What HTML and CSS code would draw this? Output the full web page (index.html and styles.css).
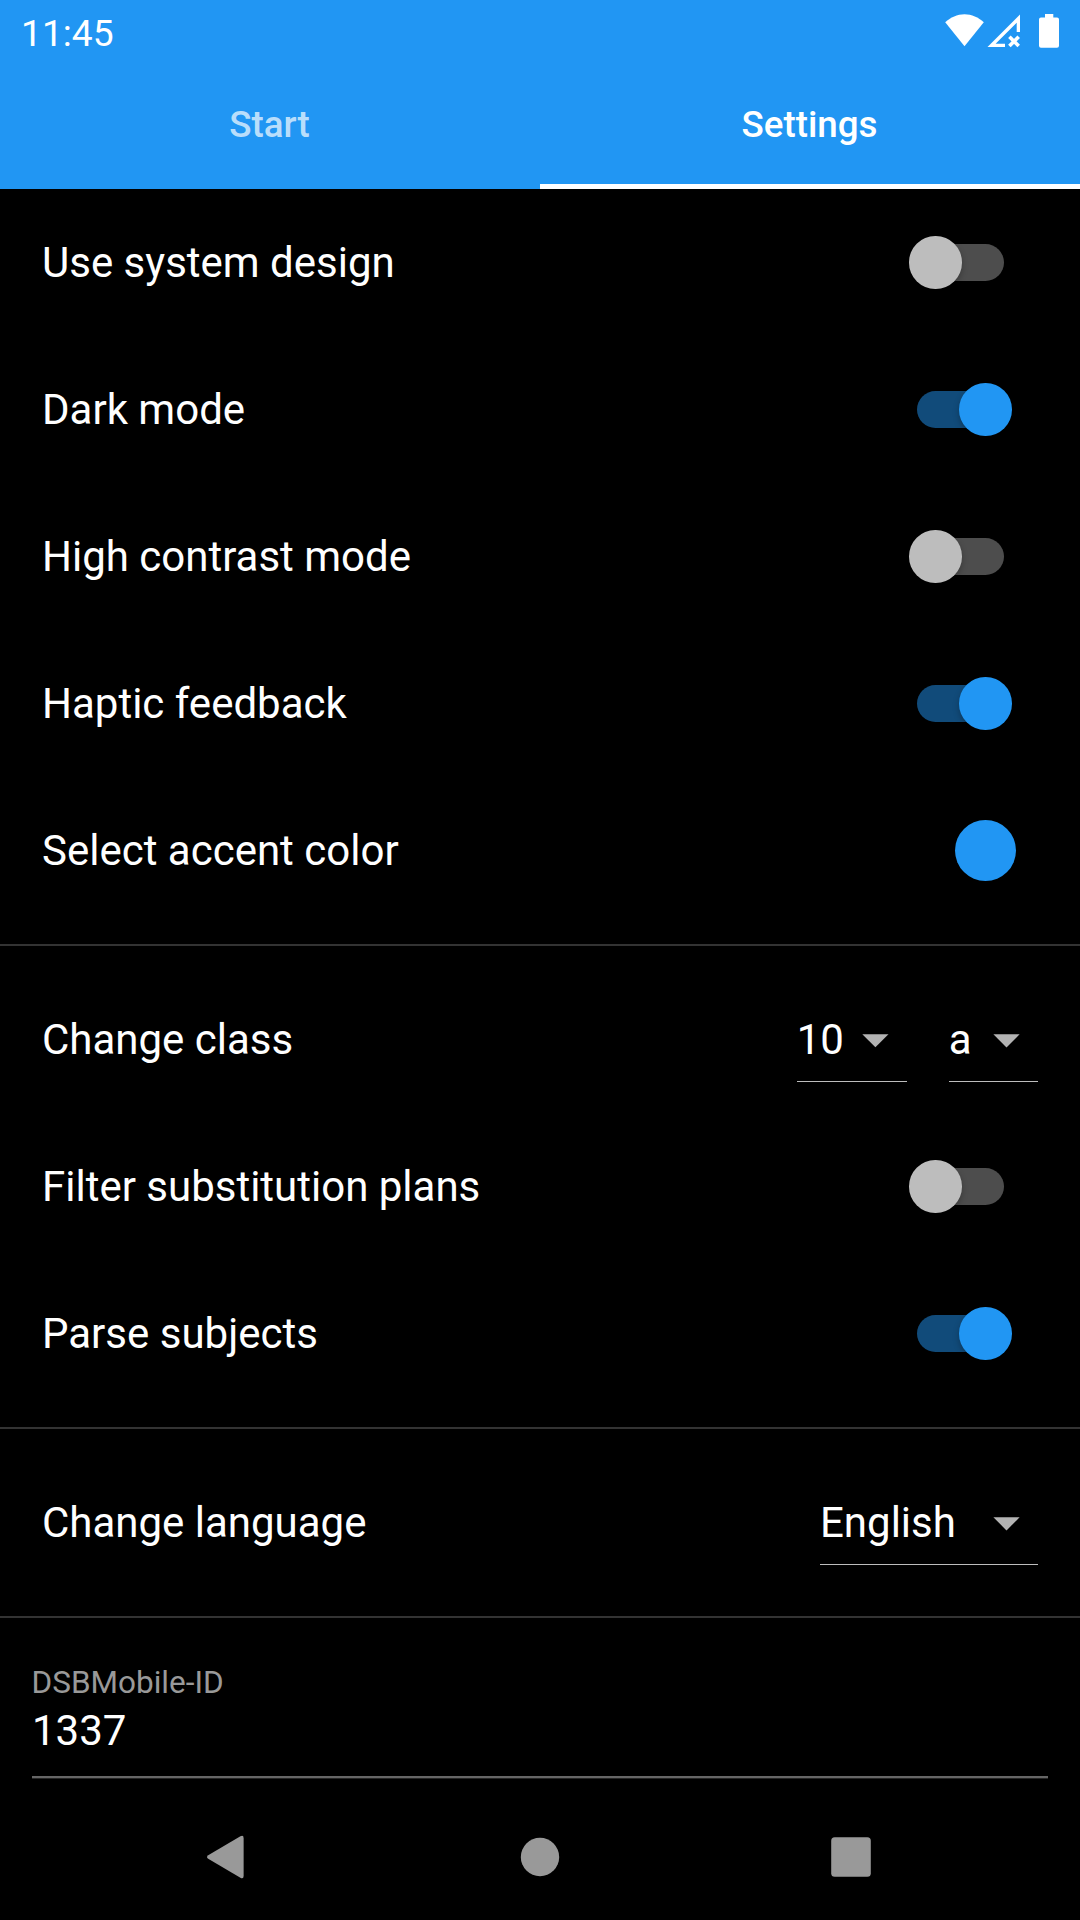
FILE: index.html
```html
<!DOCTYPE html>
<html lang="en">
<head>
<meta charset="utf-8">
<title>Settings</title>
<link rel="stylesheet" href="styles.css">
</head>
<body>
<header class="app-bar">
  <div class="status">
    <span class="clock">11:45</span>
    <svg class="status-icons" width="120" height="63" viewBox="940 0 120 63" fill="#fff">
      <path d="M945.2 22.3C950.6 17.2 957.3 14.2 964.5 14.2S978.4 17.2 983.8 22.3L964.5 46.2Z"/>
      <path d="M987.5 47L1020 14.5V32H1016.7V22.7L995.6 43.7H1005V47Z"/>
      <path d="M1009.4 36.7L1018.7 46M1018.7 36.7L1009.4 46" stroke="#fff" stroke-width="3.6"/>
      <path d="M1045 14h8.3v3.6h3.7a2 2 0 0 1 2 2V45.7a2 2 0 0 1-2 2h-16a2 2 0 0 1-2-2V19.6a2 2 0 0 1 2-2h4z"/>
    </svg>
  </div>
  <nav class="tabs">
    <div class="tab">Start</div>
    <div class="tab active">Settings</div>
  </nav>
</header>

<main class="settings">
  <div class="row"><span>Use system design</span><span class="switch"><i></i></span></div>
  <div class="row"><span>Dark mode</span><span class="switch on"><i></i></span></div>
  <div class="row"><span>High contrast mode</span><span class="switch"><i></i></span></div>
  <div class="row"><span>Haptic feedback</span><span class="switch on"><i></i></span></div>
  <div class="row"><span>Select accent color</span><span class="swatch"></span></div>
  <div class="divider"></div>
  <div class="row">
    <span>Change class</span>
    <div class="selects">
      <div class="select grade"><span>10</span><svg viewBox="0 0 24 24"><path d="M7 10l5 5 5-5z"/></svg></div>
      <div class="select letter"><span>a</span><svg viewBox="0 0 24 24"><path d="M7 10l5 5 5-5z"/></svg></div>
    </div>
  </div>
  <div class="row"><span>Filter substitution plans</span><span class="switch"><i></i></span></div>
  <div class="row"><span>Parse subjects</span><span class="switch on"><i></i></span></div>
  <div class="divider"></div>
  <div class="row">
    <span>Change language</span>
    <div class="selects">
      <div class="select language"><span>English</span><svg viewBox="0 0 24 24"><path d="M7 10l5 5 5-5z"/></svg></div>
    </div>
  </div>
  <div class="divider"></div>
  <div class="field">
    <div class="field-label">DSBMobile-ID</div>
    <div class="field-value">1337</div>
  </div>
</main>

<footer class="system-nav">
  <svg width="1080" height="126" viewBox="0 0 1080 126" fill="#999">
    <path d="M208.2 61.2L240.4 42.2Q243.6 40.6 243.6 44V82Q243.6 85.4 240.4 83.8L208.2 64.8Q205.8 63 208.2 61.2Z"/>
    <circle cx="540" cy="63" r="19.2"/>
    <rect x="831.2" y="43.2" width="39.6" height="39.6" rx="3.5"/>
  </svg>
</footer>
</body>
</html>
```
FILE: styles.css
```css
* { box-sizing: border-box; }

body {
  margin: 0;
  width: 1080px;
  height: 1920px;
  display: flex;
  flex-direction: column;
  overflow: hidden;
  background: #000;
  color: #fff;
  font-family: Roboto, sans-serif;
  font-size: 42px;
}

.app-bar { background: #2196f3; }

.status {
  display: flex;
  justify-content: space-between;
  height: 63px;
  padding: 0 20px 0 21px;
}

.clock { font-size: 37.2px; line-height: 67px; }

.tabs { display: flex; height: 126px; }

.tab {
  flex: 1;
  display: flex;
  align-items: center;
  justify-content: center;
  border-bottom: 5px solid transparent;
  padding: 1px 1px 0 0;
  color: rgba(255, 255, 255, .7);
  font-size: 36.75px;
  font-weight: 500;
}

.tab.active { color: #fff; border-bottom-color: #fff; }

.settings { flex: 1; }

.row {
  display: flex;
  align-items: center;
  justify-content: space-between;
  height: 147px;
  padding: 0 42px;
}

.switch {
  display: flex;
  align-items: center;
  width: 86.6px;
  height: 36.75px;
  margin-right: 34px;
  border-radius: 19px;
  background: #4d4d4d;
}

.switch i {
  flex: none;
  width: 52.5px;
  height: 52.5px;
  margin-left: -8px;
  border-radius: 50%;
  background: #bdbdbd;
  box-shadow: 0 3px 6px rgba(0, 0, 0, .25);
}

.switch.on { justify-content: flex-end; background: #114b7a; }
.switch.on i { margin: 0 -7.5px 0 0; background: #2196f3; }

.swatch {
  width: 61px;
  height: 61px;
  margin-right: 22px;
  border-radius: 50%;
  background: #2196f3;
}

.divider {
  height: 42px;
  padding-top: 20px;
}

.divider::before {
  content: "";
  display: block;
  height: 2px;
  background: #333;
}

.selects { display: flex; gap: 42px; }

.select {
  display: flex;
  align-items: center;
  justify-content: space-between;
  height: 85px;
  border-bottom: 1px solid #bdbdbd;
}

.select svg { width: 63px; height: 63px; fill: #b3b3b3; }
.select.grade { width: 110px; }
.select.letter { width: 89.3px; }
.select.language { width: 218px; }

.field {
  height: 140px;
  margin: 0 32px 0 31.5px;
  padding-top: 26px;
  border-bottom: 2px solid #666;
  box-shadow: 0 1px 0 #262626;
}

.field-label { color: #999; font-size: 31.5px; line-height: 37px; }
.field-value { line-height: 49px; margin: 5px 0 0 .5px; }

.system-nav { height: 126px; }
.system-nav svg { display: block; }
```
